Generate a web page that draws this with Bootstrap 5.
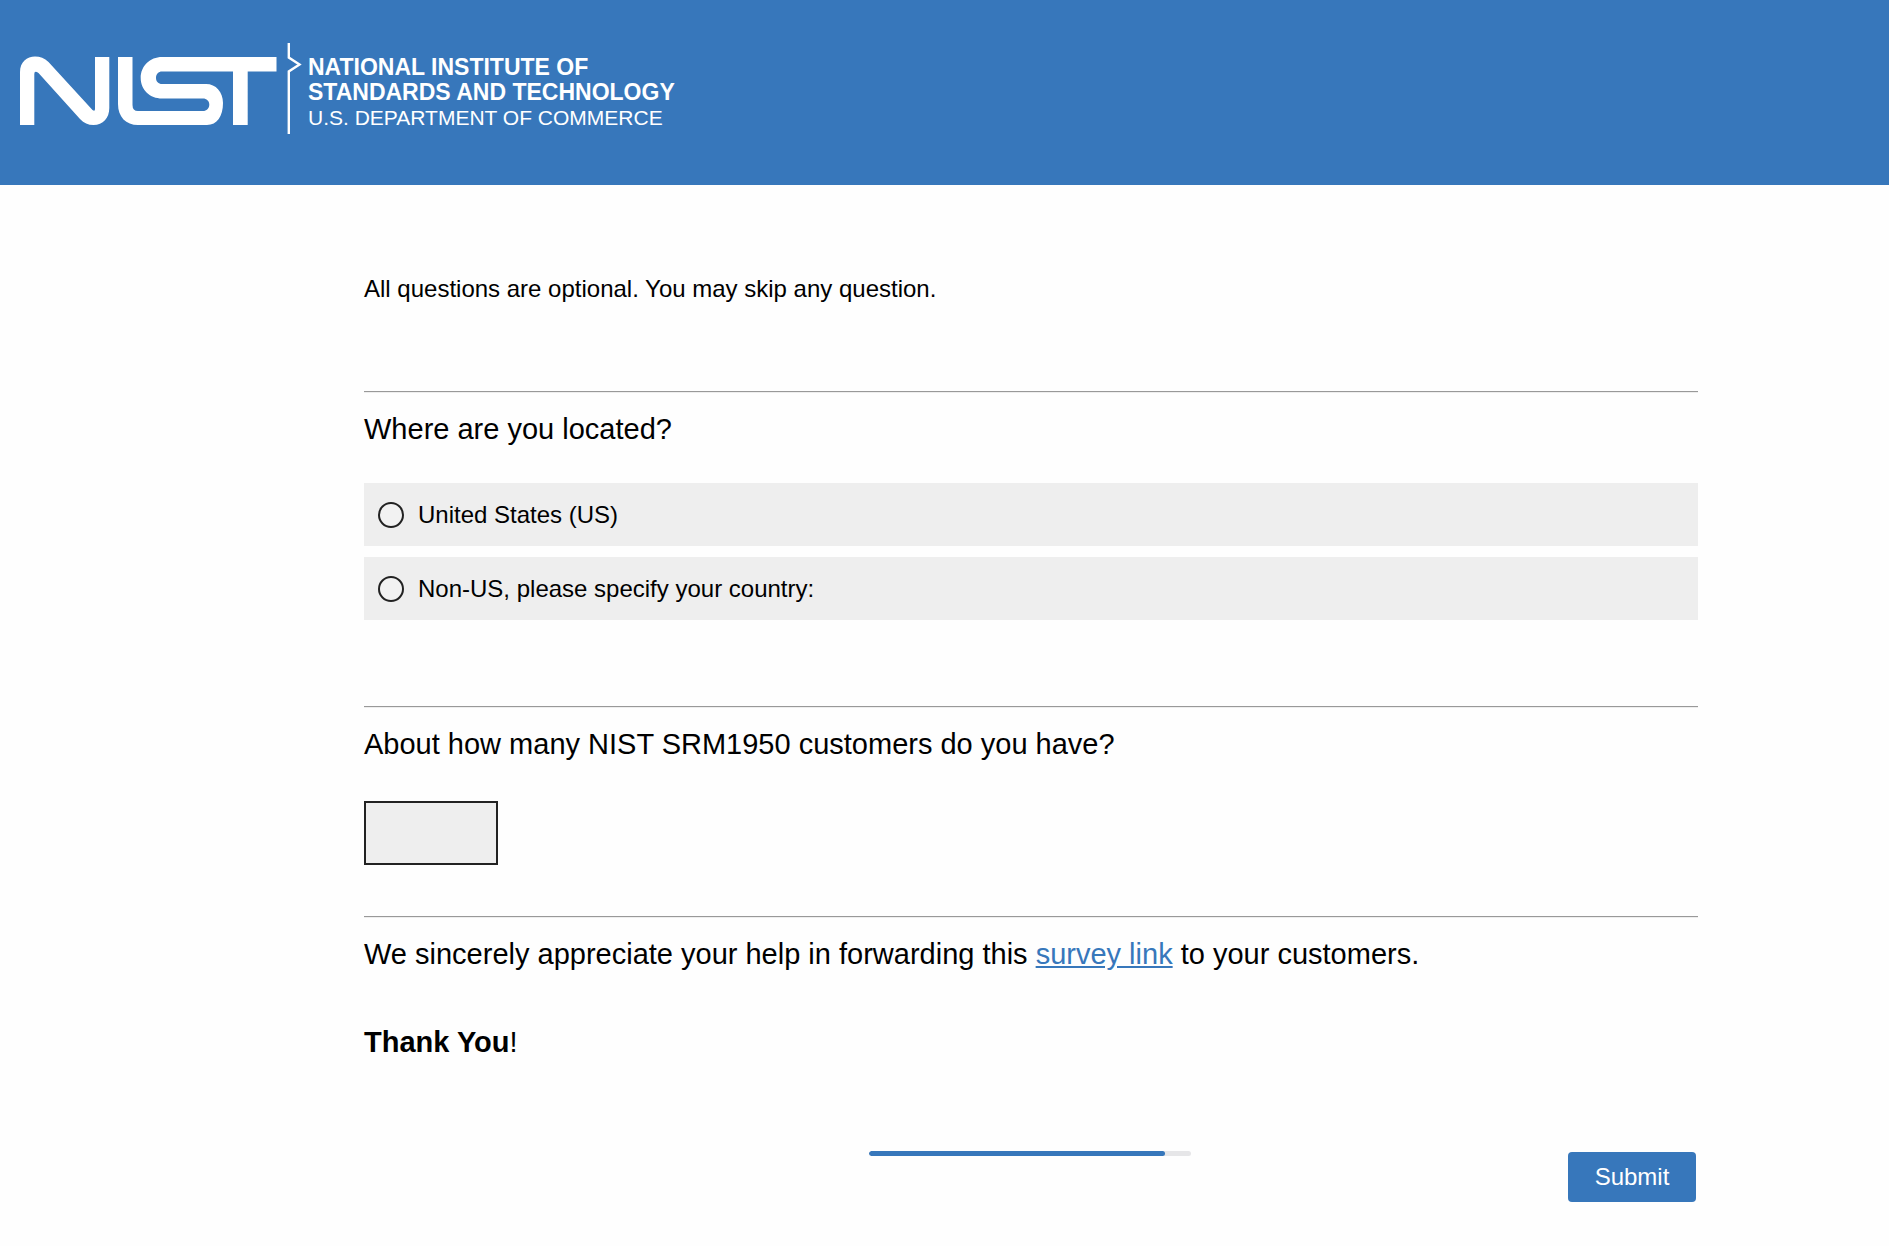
<!DOCTYPE html>
<html lang="en">
<head>
<meta charset="utf-8">
<meta name="viewport" content="width=device-width, initial-scale=1">
<title>NIST SRM1950 Survey</title>
<link href="https://cdn.jsdelivr.net/npm/bootstrap@5.3.0/dist/css/bootstrap.min.css" rel="stylesheet">
<style>
  :root { --nist-blue: #3777bb; }
  body { background: #fefefe; color: #000; font-family: "Liberation Sans", Arial, sans-serif; font-size: 24px; line-height: 36px; }
  .site-header { background: var(--nist-blue); color: #fff; min-height: 185px; padding: 43px 20px 0; }
  .brand-mark { width: 282px; height: 91px; flex: none; }
  .brand-text { font-size: 23px; line-height: 25px; padding: 12px 0 0 6px; }
  .brand-dept { font-size: 21px; }
  .survey { padding: 86px 191px 44px 364px; }
  .rule { border: 0; border-top: 1px solid #999; border-bottom: 1px solid #eee; opacity: 1; height: 2px; margin: 0 0 15px; }
  .question { font-size: 29px; line-height: 42px; font-weight: 400; margin: 0; }
  .intro { padding-bottom: 84px; }
  .location-block { padding-bottom: 86px; }
  .count-block { padding-bottom: 51px; }
  .choices { gap: 11px; padding-top: 33px; }
  .choice { background: #eee; min-height: 63px; padding: 0 14px; gap: 14px; cursor: pointer; }
  .choice .form-check-input { width: 26px; height: 26px; margin: 0; border: 2px solid #222; background-color: #f2f2f2; flex: none; }
  .choice .form-check-input:checked { background-color: var(--nist-blue); }
  .count-box { width: 134px; height: 64px; margin-top: 36px; border: 2px solid #222; border-radius: 0; background: #eee; font-size: 24px; }
  .survey-link { color: var(--nist-blue); }
  .thanks { margin-top: 46px; }
  .survey-footer { display: grid; grid-template-columns: 1fr 322px 1fr; margin-top: 88px; padding-right: 2px; }
  .survey-progress { height: 5px; border-radius: 3px; background: #e6e6e8; }
  .survey-progress .progress-bar { background: var(--nist-blue); border-radius: 3px; }
  .submit-btn { width: 128px; height: 50px; padding: 0; background: var(--nist-blue); color: #fff; font-size: 24px; border: 0; border-radius: 4px; margin-top: 1px; }
  .submit-btn:hover { background: #2b629d; color: #fff; }
  @media (max-width: 1199px) {
    .survey { padding: 48px 24px; }
    .survey-footer { grid-template-columns: 0 1fr auto; gap: 24px; }
  }
</style>
</head>
<body>
<header class="site-header">
  <div class="d-flex align-items-start">
    <svg class="brand-mark" viewBox="20 43 282 91" role="img" aria-label="NIST">
      <path fill="#fff" d="M20 125V72C20 62 27 56.5 35 56.5C40 56.5 44.500 58 48.500 62L92.500 110Q95 112 95 109V57H109.300V108C109.300 118 103 125 93.500 125C88 125 84 123 80 119L38.500 73Q34.300 70 34.300 74V125Z"/>
      <path fill="#fff" d="M118 57H132.500V105Q132.500 111 138 111H203C206.500 111 209.300 108.500 209.300 104.500C209.300 101 206.500 98.500 203 98.500H162C150 98.500 140.700 90 140.700 78C140.700 66 150 57 162 57H276.500V71.500H247.700V125H233V71.500H162C158.500 71.500 156 74 156 78C156 81.500 158.500 84 162 84H206C216 84 223 92 223 103C223 116 217 125 207 125H138C126 125 118 117 118 104Z"/>
      <path fill="none" stroke="#fff" stroke-width="2.400" d="M288.800 43V57.500L299.500 64.500L288.800 71.500V134"/>
    </svg>
    <div class="brand-text">
      <div class="fw-bold">NATIONAL INSTITUTE OF<br>STANDARDS AND TECHNOLOGY</div>
      <div class="brand-dept">U.S. DEPARTMENT OF COMMERCE</div>
    </div>
  </div>
</header>

<main>
  <form class="survey">
    <p class="mb-0 intro">All questions are optional. You may skip any question.</p>

    <hr class="rule">
    <div class="location-block" role="radiogroup" aria-labelledby="q-location">
      <h2 class="question" id="q-location">Where are you located?</h2>
      <div class="choices d-flex flex-column">
        <label class="choice d-flex align-items-center" for="loc-us">
          <input class="form-check-input" type="radio" name="location" id="loc-us">
          <span>United States (US)</span>
        </label>
        <label class="choice d-flex align-items-center" for="loc-other">
          <input class="form-check-input" type="radio" name="location" id="loc-other">
          <span>Non-US, please specify your country:</span>
        </label>
      </div>
    </div>

    <hr class="rule">
    <div class="count-block">
      <label class="question d-block" for="customers">About how many NIST SRM1950 customers do you have?</label>
      <input class="form-control count-box" type="text" inputmode="numeric" id="customers">
    </div>

    <hr class="rule">
    <p class="question">We sincerely appreciate your help in forwarding this <a class="survey-link" href="#">survey link</a> to your customers.</p>
    <p class="question thanks"><strong>Thank You</strong>!</p>

    <div class="survey-footer">
      <span></span>
      <div class="progress survey-progress" role="progressbar" aria-label="Survey completion" aria-valuenow="92" aria-valuemin="0" aria-valuemax="100">
        <div class="progress-bar" style="width: 92%"></div>
      </div>
      <button class="btn submit-btn ms-auto" type="submit">Submit</button>
    </div>
  </form>
</main>
<script src="https://cdn.jsdelivr.net/npm/bootstrap@5.3.0/dist/js/bootstrap.bundle.min.js"></script>
</body>
</html>
